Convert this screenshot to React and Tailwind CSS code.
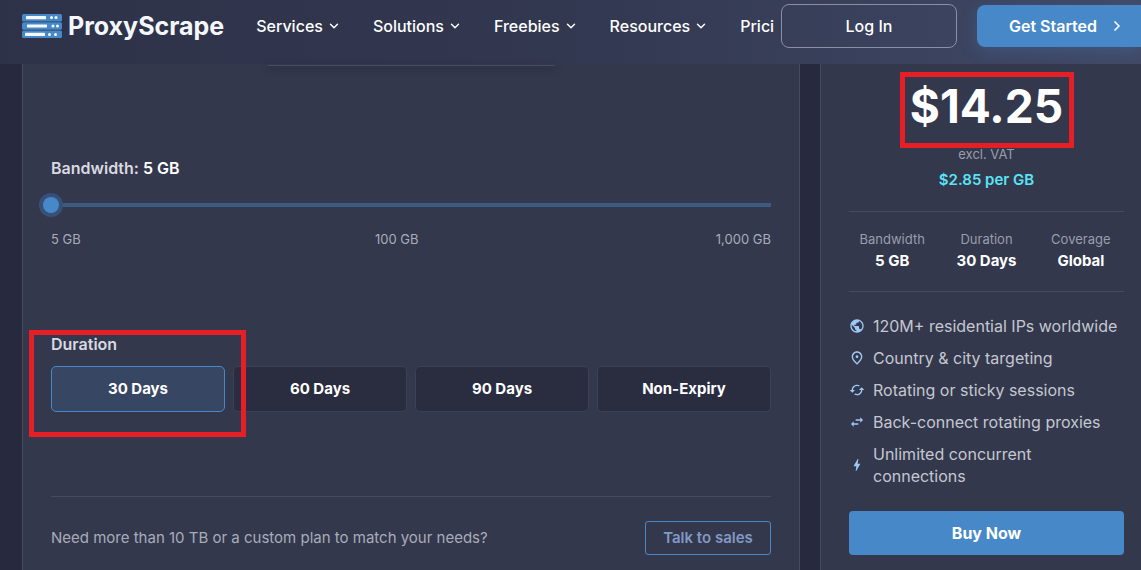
import { useState } from 'react'
import { MdPublic, MdOutlinePlace, MdCached, MdSwapHoriz, MdBolt } from 'react-icons/md'
import { ChevronDown, ChevronRight } from 'lucide-react'

const navItems = ['Services', 'Solutions', 'Freebies', 'Resources']

const durations = ['30 Days', '60 Days', '90 Days', 'Non-Expiry']

const features = [
  { icon: MdPublic, text: '120M+ residential IPs worldwide' },
  { icon: MdOutlinePlace, text: 'Country & city targeting' },
  { icon: MdCached, text: 'Rotating or sticky sessions' },
  { icon: MdSwapHoriz, text: 'Back-connect rotating proxies' },
  { icon: MdBolt, text: 'Unlimited concurrent connections' },
]

function Logo() {
  return (
    <a href="#" className="flex items-center gap-[6px] shrink-0 mr-8">
      <svg width="40" height="24" viewBox="0 0 40 24" aria-hidden="true">
        <g fill="#4789c8">
          <rect width="40" height="7.4" rx="1.5" />
          <rect y="8.3" width="40" height="7.4" rx="1.5" />
          <rect y="16.6" width="40" height="7.4" rx="1.5" />
        </g>
        <g fill="#f4f8fd">
          <rect x="4" y="2" width="20" height="3.2" rx="0.5" />
          <rect x="5" y="10.4" width="20" height="3.2" rx="0.5" />
          <rect x="3" y="18.8" width="20" height="3.2" rx="0.5" />
          <circle cx="29.5" cy="3.6" r="1.5" />
          <circle cx="34" cy="3.6" r="1.5" />
          <circle cx="31" cy="12" r="1.5" />
          <circle cx="35.5" cy="12" r="1.5" />
          <circle cx="27.5" cy="20.4" r="1.5" />
          <circle cx="33.5" cy="20.4" r="1.5" />
        </g>
      </svg>
      <span className="text-[25px] leading-8 font-bold text-[#f4f8fd]">ProxyScrape</span>
    </a>
  )
}

function Header() {
  return (
    <header className="h-16 flex items-start bg-linear-to-r from-[#2e3249] via-[#323850] to-[#414967] pl-[22px]">
      <div className="flex flex-1 min-w-0 items-center h-[52px] overflow-hidden">
        <Logo />
        <nav className="flex items-center gap-8 text-base font-medium text-white whitespace-nowrap">
          {navItems.map(item => (
            <button key={item} className="flex items-center gap-1">
              {item}
              <ChevronDown size={14} strokeWidth={2.5} />
            </button>
          ))}
          <a href="#" aria-label="Pricing">Prici</a>
        </nav>
      </div>
      <div className="flex items-center gap-5 h-[52px] pl-1 shrink-0 text-base font-medium text-white">
        <button className="w-44 h-11 rounded-lg border border-[#8a8fa5]">Log In</button>
        <button className="flex items-center justify-center gap-3 h-[42px] w-[164px] pl-4 rounded-l-lg bg-[#4789c8] font-semibold shadow-[0_4px_16px_rgba(71,137,200,0.25)]">
          Get Started
          <ChevronRight size={16} strokeWidth={2.5} />
        </button>
      </div>
    </header>
  )
}

function PlanForm() {
  const [duration, setDuration] = useState('30 Days')

  return (
    <section className="flex-1 min-w-0 px-7 border-x border-[#474b60] bg-[#33384d]">
      {/* Lower edge of the plan picker */}
      <div className="w-72 h-[2px] mx-auto rounded-b border-b border-[#484c5e] shadow-[0_3px_6px_rgba(32,35,52,0.8)]" />

      <label htmlFor="bandwidth" className="block mt-[92px] text-base leading-5 font-semibold text-[#d9dae0]">
        Bandwidth: <span className="text-white">5 GB</span>
      </label>
      <input
        id="bandwidth"
        type="range"
        min="5"
        max="1000"
        defaultValue="5"
        className="block -mx-2 mt-[17px] h-5 w-[calc(100%+16px)] appearance-none bg-[linear-gradient(#3d5a80,#3d5a80)] bg-[length:calc(100%-16px)_4px] bg-center bg-no-repeat [&::-webkit-slider-thumb]:appearance-none [&::-webkit-slider-thumb]:size-4 [&::-webkit-slider-thumb]:rounded-full [&::-webkit-slider-thumb]:bg-[#4789c8] [&::-webkit-slider-thumb]:shadow-[0_0_0_4px_#37507a]"
      />
      <div className="grid grid-cols-3 mt-[14px] text-[13px] leading-5 text-[#a9acb9]">
        <span>5 GB</span>
        <span className="pl-[84px]">100 GB</span>
        <span className="text-right">1,000 GB</span>
      </div>

      <div className="relative mt-[85px]">
        <h2 className="text-base leading-5 font-semibold text-[#d9dae0]">Duration</h2>
        <div className="grid grid-cols-4 gap-2 mt-3">
          {durations.map(item => (
            <button
              key={item}
              onClick={() => setDuration(item)}
              className={`h-[46px] rounded-[5px] border text-[15px] font-bold text-white ${
                item === duration ? 'border-[#4789c8] bg-[#374663]' : 'border-[#3e4156] bg-[#2a2c40]'
              }`}
            >
              {item}
            </button>
          ))}
        </div>
        <div className="absolute -left-[22px] -top-1 w-[217px] h-[107px] border-5 border-[#e61e25] pointer-events-none" />
      </div>

      <div className="flex items-center justify-between mt-[84px] pt-6 pb-6 border-t border-[#484b60]">
        <p className="text-[15px] text-[#a9acb9]">Need more than 10 TB or a custom plan to match your needs?</p>
        <a
          href="#"
          className="flex items-center justify-center w-[126px] h-[34px] rounded-[3px] border border-[#4789c8] text-[15px] font-semibold text-[#8299c3]"
        >
          Talk to sales
        </a>
      </div>
    </section>
  )
}

function Stat({ label, value }) {
  return (
    <div>
      <dt className="text-[13px] leading-5 text-[#9a9dac]">{label}</dt>
      <dd className="mt-[2px] text-[15px] leading-5 font-bold text-white">{value}</dd>
    </div>
  )
}

function Summary() {
  return (
    <aside className="w-[333px] shrink-0 px-7 border-x border-[#474b60] bg-[#33384d]">
      <div className="text-center">
        <div className="relative w-[174px] h-[76px] mx-auto mt-2">
          <p className="pt-1 text-[46px] leading-[60px] font-bold text-white">$14.25</p>
          <div className="absolute inset-0 border-5 border-[#e61e25] pointer-events-none" />
        </div>
        <p className="-mt-1 text-[13px] leading-5 text-[#9a9dac]">excl. VAT</p>
        <p className="mt-[6px] text-[15px] leading-5 font-semibold text-[#5be3f5]">$2.85 per GB</p>
      </div>

      <dl className="grid grid-cols-3 gap-2 mt-[21px] pt-[17px] pb-5 border-y border-[#484b60] text-center">
        <Stat label="Bandwidth" value="5 GB" />
        <Stat label="Duration" value="30 Days" />
        <Stat label="Coverage" value="Global" />
      </dl>

      <ul className="mt-[23px] space-y-[10px] text-base leading-[22px] text-[#c5c7d0]">
        {features.map(({ icon: Icon, text }) => (
          <li key={text} className="flex items-center gap-2">
            <Icon size={16} className="shrink-0 text-[#9ec9f5]" />
            <span>{text}</span>
          </li>
        ))}
      </ul>

      <button className="w-full h-11 mt-6 rounded-[4px] bg-[#4789c8] text-base font-bold text-white">Buy Now</button>
    </aside>
  )
}

export default function App() {
  return (
    <div className="flex flex-col min-h-screen overflow-x-hidden bg-[#272a3e] font-['Inter',sans-serif]">
      <Header />
      {/* The plan grid runs a little past the right edge of the window */}
      <main className="flex flex-1 gap-5 ml-[22px] -mr-3">
        <PlanForm />
        <Summary />
      </main>
    </div>
  )
}
